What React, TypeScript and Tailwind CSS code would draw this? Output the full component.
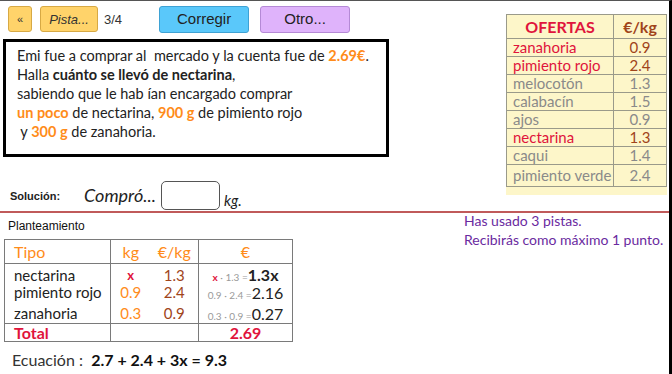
import React from 'react';

const ofertas = [
  { name: 'zanahoria', price: '0.9', hot: true },
  { name: 'pimiento rojo', price: '2.4', hot: true },
  { name: 'melocotón', price: '1.3', hot: false },
  { name: 'calabacín', price: '1.5', hot: false },
  { name: 'ajos', price: '0.9', hot: false },
  { name: 'nectarina', price: '1.3', hot: true },
  { name: 'caqui', price: '1.4', hot: false },
  { name: 'pimiento verde', price: '2.4', hot: false },
];

const sans = { fontFamily: 'Lato, "Open Sans", sans-serif' };
const arial = { fontFamily: '"Liberation Sans", Arial, sans-serif' };

function Ofertas() {
  return (
    <div className="bg-[#fdf6c9] pb-2 w-[161px]" style={sans}>
      <table className="border-collapse w-full text-[15px] leading-none">
        <thead>
          <tr className="h-[24px]">
            <th className="border border-[#9a9a8a] text-[#e0143c] font-bold text-[16px] w-[107px]">OFERTAS</th>
            <th className="border border-[#9a9a8a] text-[#a0441a] font-bold text-[16px]">€/kg</th>
          </tr>
        </thead>
        <tbody>
          {ofertas.map((o, i) => (
            <tr key={o.name} className={i === ofertas.length - 1 ? 'h-[22px]' : 'h-[18px]'}>
              <td className={`border border-[#9a9a8a] pl-[6px] ${o.hot ? 'text-[#e0143c]' : 'text-[#8a8a8a]'}`}>{o.name}</td>
              <td className={`border border-[#9a9a8a] text-center ${o.hot ? 'text-[#a0441a]' : 'text-[#8a8a8a]'}`}>{o.price}</td>
            </tr>
          ))}
        </tbody>
      </table>
    </div>
  );
}

function Planteamiento() {
  return (
    <table className="border-collapse text-[15px] leading-none" style={sans}>
      <thead>
        <tr className="h-[24px] text-[#ff8c1a] text-[16px]">
          <th className="border border-[#7a7a7a] font-normal text-left pl-[9px] w-[106px]">Tipo</th>
          <th className="border-y border-[#7a7a7a] font-normal w-[40px] text-center">kg</th>
          <th className="border-y border-r border-[#7a7a7a] font-normal w-[48px] text-center">€/kg</th>
          <th className="border border-[#7a7a7a] font-normal w-[94px] text-center">€</th>
        </tr>
      </thead>
      <tbody>
        <tr className="h-[20px]">
          <td className="border-l border-r border-[#7a7a7a] pl-[9px] pt-[3px]">nectarina</td>
          <td className="text-center text-[#e0143c] font-bold text-[13px] pt-[3px]">x</td>
          <td className="border-r border-[#7a7a7a] text-center text-[#a0441a] pt-[3px]">1.3</td>
          <td className="border-r border-[#7a7a7a] text-center pt-[3px] whitespace-nowrap">
            <span className="text-[10px] text-[#e0143c] font-bold">x</span>
            <span className="text-[10px] text-[#9a9a9a]"> · 1.3 =</span>
            <span className="font-bold text-[16px] leading-none">1.3x</span>
          </td>
        </tr>
        <tr className="h-[18px]">
          <td className="border-l border-r border-[#7a7a7a] pl-[9px]">pimiento rojo</td>
          <td className="text-center text-[#ff8c1a]">0.9</td>
          <td className="border-r border-[#7a7a7a] text-center text-[#a0441a]">2.4</td>
          <td className="border-r border-[#7a7a7a] text-center whitespace-nowrap">
            <span className="text-[10px] text-[#9a9a9a]">0.9 · 2.4 =</span>
            <span className="text-[16px] leading-none">2.16</span>
          </td>
        </tr>
        <tr className="h-[22px]">
          <td className="border-l border-r border-[#7a7a7a] pl-[9px] pt-[3px]">zanahoria</td>
          <td className="text-center text-[#ff8c1a] pt-[3px]">0.3</td>
          <td className="border-r border-[#7a7a7a] text-center text-[#a0441a] pt-[3px]">0.9</td>
          <td className="border-r border-[#7a7a7a] text-center pt-[3px] whitespace-nowrap">
            <span className="text-[10px] text-[#9a9a9a]">0.3 · 0.9 =</span>
            <span className="text-[16px] leading-none">0.27</span>
          </td>
        </tr>
        <tr className="h-[18px] text-[16px]">
          <td className="border border-[#7a7a7a] pl-[9px] text-[#e0143c] font-bold">Total</td>
          <td className="border-y border-[#7a7a7a]"></td>
          <td className="border-y border-r border-[#7a7a7a]"></td>
          <td className="border border-[#7a7a7a] text-center text-[#e0143c] font-bold">2.69</td>
        </tr>
      </tbody>
    </table>
  );
}

export default function App() {
  return (
    <div className="w-[672px] h-[374px] bg-white border-t border-t-[#555] border-r-[3px] border-r-black overflow-hidden text-[#222]">
      <div className="flex h-[210px]">
        <div className="w-[500px] flex flex-col">
          <div className="flex items-center h-[36px] pl-[8px] pt-[1px]" style={arial}>
            <button className="w-[24px] h-[26px] bg-[#ffd36a] border border-[#d7a944] rounded-[3px] text-[11px] text-[#333]">«</button>
            <button className="ml-[8px] w-[58px] h-[26px] bg-[#ffd36a] border border-[#d7a944] rounded-[3px] text-[13px] italic text-[#333]">Pista...</button>
            <span className="ml-[6px] text-[13px] text-[#333]">3/4</span>
            <button className="ml-[37px] w-[90px] h-[27px] bg-[#5ac8fa] border border-[#3ea2d4] rounded-[3px] text-[15px] text-[#222]">Corregir</button>
            <button className="ml-[11px] w-[90px] h-[27px] bg-[#dfb3fb] border border-[#b58ad6] rounded-[3px] text-[15px] text-[#222]">Otro...</button>
          </div>
          <div className="ml-[3px] mt-[2px] w-[386px] h-[119px] border-[3px] border-black px-[11px] pt-[4px] text-[14.5px] leading-[19px] whitespace-nowrap" style={sans}>
            <div>Emi fue a comprar al&nbsp; mercado y la cuenta fue de <b className="text-[#ff8c1a]">2.69€</b>.</div>
            <div>Halla <b>cuánto se llevó de nectarina</b>,</div>
            <div>sabiendo que le hab ían encargado comprar</div>
            <div><b className="text-[#ff8c1a]">un poco</b> de nectarina, <b className="text-[#ff8c1a]">900 g</b> de pimiento rojo</div>
            <div>&nbsp;y <b className="text-[#ff8c1a]">300 g</b> de zanahoria.</div>
          </div>
          <div className="flex items-center mt-[24px] pl-[10px]">
            <span className="text-[11px] font-bold text-[#222]" style={arial}>Solución:</span>
            <span className="ml-[24px] text-[18px] italic" style={sans}>Compró...</span>
            <div className="ml-[5px] w-[59px] h-[29px] border-[1.5px] border-[#555] rounded-[5px] bg-white"></div>
            <span className="ml-[4px] mt-[8px] text-[15px] italic" style={sans}>kg.</span>
          </div>
        </div>
        <div className="pt-[13px] pl-[6px]">
          <Ofertas />
        </div>
      </div>
      <div className="h-[2px] bg-[#c05a5a]"></div>
      <div className="flex">
        <div className="w-[460px] pl-[4px]">
          <div className="pl-[4px] pt-[4px] text-[12px] text-[#111]" style={arial}>Planteamiento</div>
          <div className="mt-[4px]">
            <Planteamiento />
          </div>
          <div className="mt-[6px] pl-[8px] text-[16px] text-[#333]" style={sans}>
            Ecuación :&nbsp; <b className="text-[#111]">2.7 + 2.4 + 3x = 9.3</b>
          </div>
        </div>
        <div className="pl-[4px] -mt-[2px] text-[14px] leading-[19px] text-[#6a2aa0]" style={sans}>
          <div>Has usado 3 pistas.</div>
          <div>Recibirás como máximo 1 punto.</div>
        </div>
      </div>
    </div>
  );
}
